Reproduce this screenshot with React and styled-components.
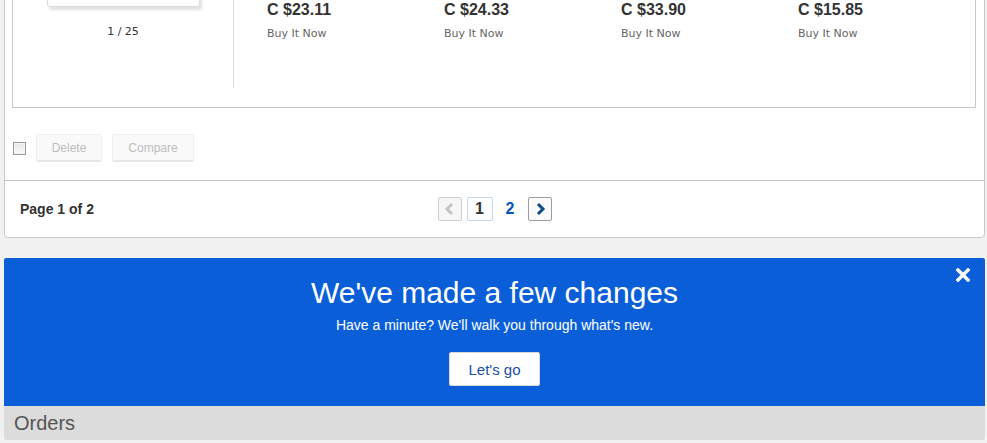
import React from "react";
import styled, { createGlobalStyle } from "styled-components";

const GlobalStyle = createGlobalStyle`
  body {
    margin: 0;
    background: #f1f1f1;
    font-family: Arial, "Liberation Sans", sans-serif;
    overflow: hidden;
  }
`;

const items = [
  { id: 1, price: "C $23.11" },
  { id: 2, price: "C $24.33" },
  { id: 3, price: "C $33.90" },
  { id: 4, price: "C $15.85" },
];

export default function App() {
  return (
    <>
      <GlobalStyle />
      <StyledPage>
        <StyledCard>
          <StyledCardBody>
            <StyledItemPanel>
              <StyledGallery>
                <StyledThumb />
                <StyledCount>1 / 25</StyledCount>
              </StyledGallery>
              <StyledItems>
                {items.map((item) => (
                  <StyledItem key={item.id}>
                    <StyledItemImage />
                    <StyledPrice>{item.price}</StyledPrice>
                    <StyledFormat>Buy It Now</StyledFormat>
                  </StyledItem>
                ))}
              </StyledItems>
            </StyledItemPanel>
            <StyledActions>
              <StyledCheckbox type="checkbox" />
              <StyledGhostButton $width={66}>Delete</StyledGhostButton>
              <StyledGhostButton $width={82}>Compare</StyledGhostButton>
            </StyledActions>
          </StyledCardBody>
          <StyledFooter>
            <StyledPageLabel>Page 1 of 2</StyledPageLabel>
            <StyledPager>
              <StyledArrow $disabled>
                <svg width="12" height="14" viewBox="0 0 12 14">
                  <polyline
                    points="8,2 3,7 8,12"
                    fill="none"
                    stroke="#c4c4c4"
                    strokeWidth="3"
                  />
                </svg>
              </StyledArrow>
              <StyledPageNumber $current>1</StyledPageNumber>
              <StyledPageNumber>2</StyledPageNumber>
              <StyledArrow>
                <svg width="12" height="14" viewBox="0 0 12 14">
                  <polyline
                    points="4,2 9,7 4,12"
                    fill="none"
                    stroke="#0d4a88"
                    strokeWidth="3"
                  />
                </svg>
              </StyledArrow>
            </StyledPager>
            <span />
          </StyledFooter>
        </StyledCard>

        <StyledBanner>
          <StyledClose aria-label="close">
            <svg width="14" height="14" viewBox="0 0 14 14">
              <path
                d="M2 2 L12 12 M12 2 L2 12"
                stroke="#fff"
                strokeWidth="3.4"
                strokeLinecap="square"
              />
            </svg>
          </StyledClose>
          <StyledBannerTitle>We've made a few changes</StyledBannerTitle>
          <StyledBannerText>
            Have a minute? We'll walk you through what's new.
          </StyledBannerText>
          <StyledBannerButton>Let's go</StyledBannerButton>
        </StyledBanner>
        <StyledSectionBar>Orders</StyledSectionBar>
      </StyledPage>
    </>
  );
}

const StyledPage = styled.div`
  margin-top: -164px;
  padding: 0 2px 0 4px;
`;

const StyledCard = styled.div`
  background: #fff;
  border: 1px solid #c8c8c8;
  border-radius: 4px;
`;

const StyledCardBody = styled.div`
  padding: 8px 8px 0 7px;
`;

const StyledItemPanel = styled.div`
  display: flex;
  border: 1px solid #c8c8c8;
  padding: 16px 0 19px;
`;

const StyledGallery = styled.div`
  width: 220px;
  border-right: 1px solid #dcdcdc;
  display: flex;
  flex-direction: column;
  align-items: center;
  padding-bottom: 48px;
`;

const StyledThumb = styled.div`
  width: 151px;
  height: 143px;
  background: #fff;
  border: 1px solid #dcdcdc;
  border-radius: 3px;
  box-shadow: 2px 3px 3px rgba(0, 0, 0, 0.12);
`;

const StyledCount = styled.div`
  margin-top: 17px;
  font-family: "DejaVu Sans", Verdana, sans-serif;
  font-size: 11px;
  line-height: 16px;
  color: #333;
`;

const StyledItems = styled.div`
  display: grid;
  grid-template-columns: repeat(4, 177px);
  padding-left: 33px;
`;

const StyledItem = styled.div`
  display: flex;
  flex-direction: column;
`;

const StyledItemImage = styled.div`
  width: 140px;
  height: 130px;
  margin-bottom: 8px;
  background: #eee;
`;

const StyledPrice = styled.div`
  font-size: 16px;
  line-height: 20px;
  font-weight: bold;
  color: #333;
`;

const StyledFormat = styled.div`
  margin-top: 6px;
  font-family: "DejaVu Sans", Verdana, sans-serif;
  font-size: 11px;
  line-height: 16px;
  color: #666;
`;

const StyledActions = styled.div`
  display: flex;
  align-items: center;
  gap: 9px;
  padding: 26px 0 18px 1px;
`;

const StyledCheckbox = styled.input`
  appearance: none;
  margin: 0 1px 0 0;
  width: 13px;
  height: 13px;
  border: 1px solid #9a9a9a;
  background: linear-gradient(#e6e6e6, #fafafa);
  box-shadow: inset 0 0 0 1px #f4f4f4;
`;

const StyledGhostButton = styled.button`
  width: ${(p) => p.$width}px;
  height: 28px;
  padding: 0;
  margin-right: 1px;
  background: #f9f9f9;
  border: 1px solid #f0f0f0;
  border-bottom: 2px solid #e6e6e6;
  border-radius: 2px;
  font-family: Arial, "Liberation Sans", sans-serif;
  font-size: 12px;
  color: #bcbcbc;
`;

const StyledFooter = styled.div`
  display: grid;
  grid-template-columns: 1fr auto 1fr;
  align-items: center;
  height: 56px;
  padding: 0 15px;
  border-top: 1px solid #c8c8c8;
`;

const StyledPageLabel = styled.div`
  font-size: 14px;
  font-weight: bold;
  color: #333;
`;

const StyledPager = styled.div`
  display: flex;
  align-items: center;
  gap: 5px;
`;

const StyledArrow = styled.span`
  display: flex;
  align-items: center;
  justify-content: center;
  width: 22px;
  height: 22px;
  border: 1px solid ${(p) => (p.$disabled ? "#cfcfcf" : "#9d9d9d")};
  border-radius: 2px;
  background: ${(p) => (p.$disabled ? "#f6f6f6" : "#fafafa")};
`;

const StyledPageNumber = styled.span`
  display: flex;
  align-items: center;
  justify-content: center;
  width: ${(p) => (p.$current ? "24px" : "23px")};
  height: 22px;
  border: 1px solid ${(p) => (p.$current ? "#c2d8ec" : "transparent")};
  border-radius: 2px;
  font-size: 16px;
  font-weight: bold;
  color: ${(p) => (p.$current ? "#333" : "#0654ba")};
`;

const StyledBanner = styled.div`
  position: relative;
  margin-top: 20px;
  height: 148px;
  box-sizing: border-box;
  padding-top: 17px;
  background: #0a5fd8;
  border-radius: 2px 2px 0 0;
  display: flex;
  flex-direction: column;
  align-items: center;
  color: #fff;
`;

const StyledClose = styled.span`
  position: absolute;
  top: 10px;
  right: 15px;
  display: flex;
`;

const StyledBannerTitle = styled.div`
  font-size: 30px;
  line-height: 36px;
`;

const StyledBannerText = styled.div`
  margin-top: 5px;
  font-size: 14px;
  line-height: 18px;
`;

const StyledBannerButton = styled.button`
  margin-top: 18px;
  width: 91px;
  height: 34px;
  background: #fff;
  border: 1px solid #d8d8d8;
  border-radius: 2px;
  font-family: Arial, "Liberation Sans", sans-serif;
  font-size: 15px;
  color: #1d4ea8;
`;

const StyledSectionBar = styled.div`
  height: 34px;
  padding-left: 10px;
  background: #dcdcdc;
  border-radius: 0 0 3px 3px;
  font-size: 20px;
  line-height: 34px;
  color: #555;
`;
